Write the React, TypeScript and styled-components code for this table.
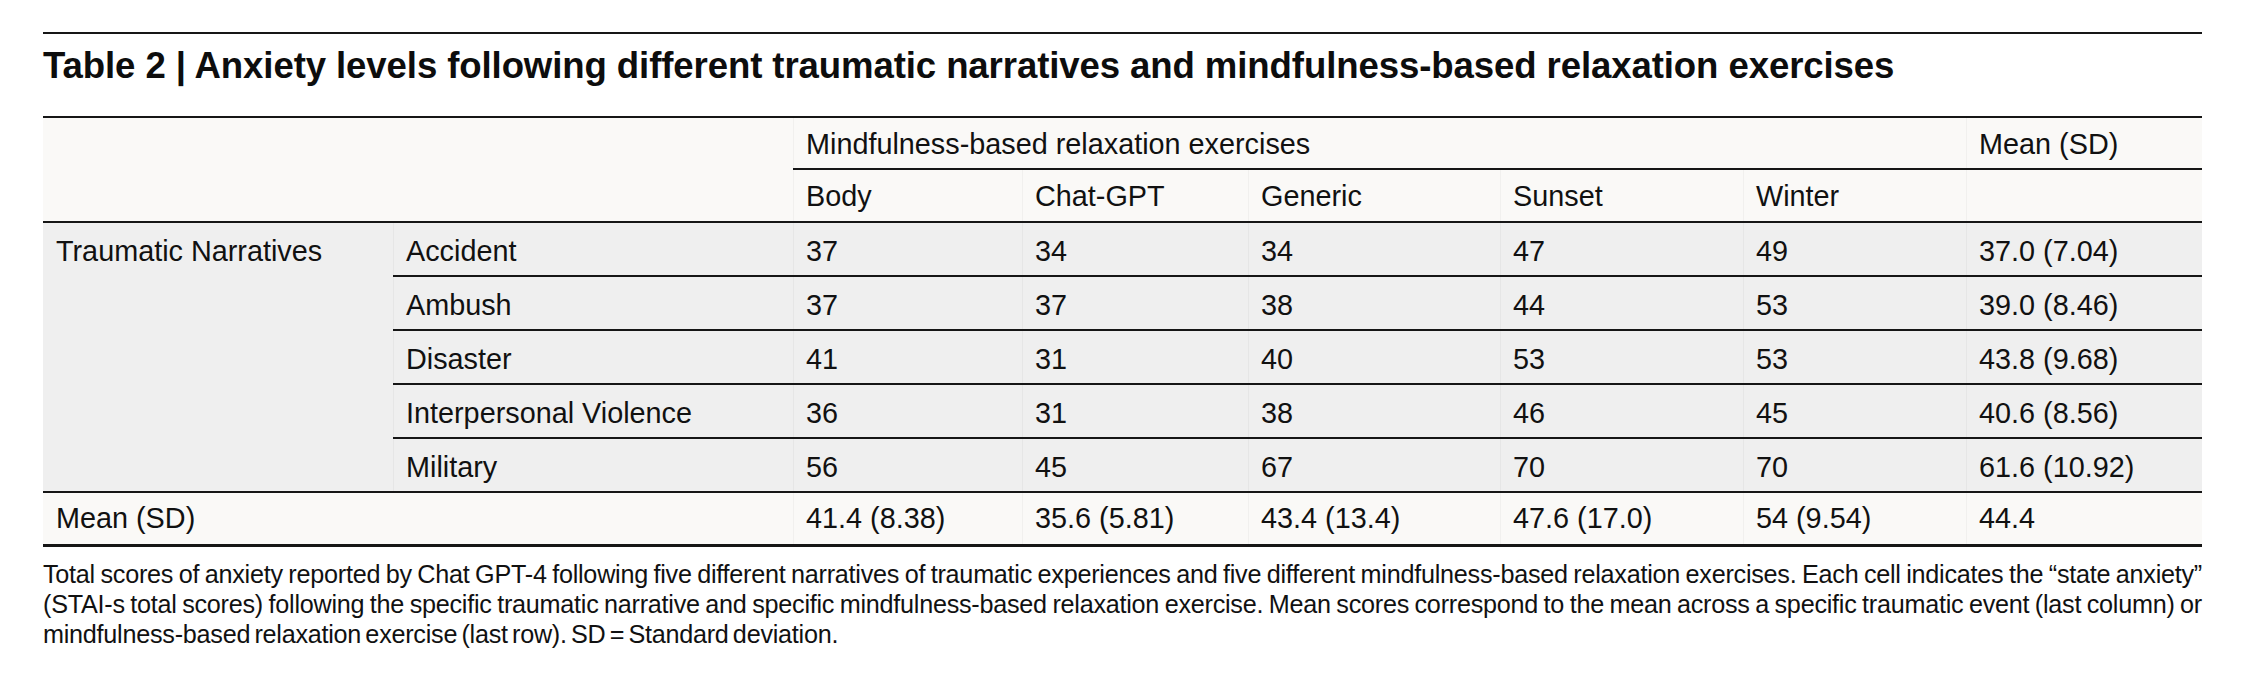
import React from "react";
import styled, { createGlobalStyle } from "styled-components";

const GlobalStyle = createGlobalStyle`
  html, body { margin: 0; padding: 0; background: #ffffff; }
  body { font-family: "Liberation Sans", Arial, sans-serif; color: #111111; }
`;

const Page = styled.div`
  padding: 32px 40px 0 43px;
`;

const Figure = styled.section`
  border-top: 2px solid #161616;
`;

const Title = styled.h1`
  margin: 12px 0 0;
  font-family: "Liberation Sans", Arial, sans-serif;
  font-weight: 700;
  font-size: 36.6px;
  line-height: 40px;
  letter-spacing: -0.1px;
  color: #0d0d0d;
`;

const Table = styled.table`
  margin-top: 30px;
  width: 100%;
  table-layout: fixed;
  border-collapse: separate;
  border-spacing: 0;
  border-top: 2px solid #161616;
  font-size: 28.8px;
  line-height: 30px;
  color: #111111;
`;

const Head = styled.thead`
  background: #faf9f7;
`;

const Body = styled.tbody`
  background: #efefef;
`;

const Foot = styled.tfoot`
  background: #faf9f7;
`;

type CellProps = {
  $rule?: boolean;
  $sep?: boolean;
  $pt: number;
  $pb: number;
  $thick?: boolean;
};

const Cell = styled.td<CellProps>`
  padding: ${(p) => p.$pt}px 8px ${(p) => p.$pb}px 13px;
  text-align: left;
  vertical-align: top;
  font-weight: 400;
  white-space: nowrap;
  border-bottom: ${(p) =>
    p.$rule ? `${p.$thick ? 3 : 2}px solid #161616` : "0 solid transparent"};
  box-shadow: ${(p) => (p.$sep ? "inset 1px 0 0 rgba(0,0,0,0.035)" : "none")};
`;

const HeadCell = styled(Cell).attrs({ as: "th" })``;

const Caption = styled.div`
  margin-top: 12px;
  font-size: 25.2px;
  line-height: 30px;
  letter-spacing: -0.25px;
  word-spacing: -2.5px;
  color: #111111;
`;

const CaptionLine = styled.span<{ $last?: boolean }>`
  display: block;
  text-align: ${(p) => (p.$last ? "left" : "justify")};
  text-align-last: ${(p) => (p.$last ? "left" : "justify")};
`;

const widths = [350, 400, 229, 226, 252, 243, 223, 236];

const exercises = ["Body", "Chat-GPT", "Generic", "Sunset", "Winter"];

const rows: { name: string; values: string[]; mean: string }[] = [
  { name: "Accident", values: ["37", "34", "34", "47", "49"], mean: "37.0 (7.04)" },
  { name: "Ambush", values: ["37", "37", "38", "44", "53"], mean: "39.0 (8.46)" },
  { name: "Disaster", values: ["41", "31", "40", "53", "53"], mean: "43.8 (9.68)" },
  {
    name: "Interpersonal Violence",
    values: ["36", "31", "38", "46", "45"],
    mean: "40.6 (8.56)",
  },
  { name: "Military", values: ["56", "45", "67", "70", "70"], mean: "61.6 (10.92)" },
];

const means = ["41.4 (8.38)", "35.6 (5.81)", "43.4 (13.4)", "47.6 (17.0)", "54 (9.54)", "44.4"];

export default function App() {
  return (
    <>
      <GlobalStyle />
      <Page>
        <Figure>
          <Title>
            Table 2 | Anxiety levels following different traumatic narratives and
            mindfulness-based relaxation exercises
          </Title>
          <Table>
            <colgroup>
              {widths.map((w, i) => (
                <col key={i} style={{ width: w }} />
              ))}
            </colgroup>
            <Head>
              <tr>
                <HeadCell colSpan={2} rowSpan={2} $pt={11} $pb={9} $rule />
                <HeadCell colSpan={5} $pt={11} $pb={9} $rule $sep>
                  Mindfulness-based relaxation exercises
                </HeadCell>
                <HeadCell $pt={11} $pb={9} $rule $sep>
                  Mean (SD)
                </HeadCell>
              </tr>
              <tr>
                {exercises.map((e) => (
                  <HeadCell key={e} $pt={11} $pb={10} $rule $sep>
                    {e}
                  </HeadCell>
                ))}
                <HeadCell $pt={11} $pb={10} $rule $sep />
              </tr>
            </Head>
            <Body>
              {rows.map((r, i) => (
                <tr key={r.name}>
                  {i === 0 && (
                    <Cell rowSpan={rows.length} $pt={13} $pb={9} $rule>
                      Traumatic Narratives
                    </Cell>
                  )}
                  <Cell $pt={13} $pb={9} $rule $sep>
                    {r.name}
                  </Cell>
                  {r.values.map((v, j) => (
                    <Cell key={j} $pt={13} $pb={9} $rule $sep>
                      {v}
                    </Cell>
                  ))}
                  <Cell $pt={13} $pb={9} $rule $sep>
                    {r.mean}
                  </Cell>
                </tr>
              ))}
            </Body>
            <Foot>
              <tr>
                <Cell colSpan={2} $pt={10} $pb={11} $rule $thick>
                  Mean (SD)
                </Cell>
                {means.map((m, j) => (
                  <Cell key={j} $pt={10} $pb={11} $rule $thick $sep>
                    {m}
                  </Cell>
                ))}
              </tr>
            </Foot>
          </Table>
          <Caption>
            <CaptionLine>
              Total scores of anxiety reported by Chat GPT-4 following five different narratives of
              traumatic experiences and five different mindfulness-based relaxation exercises. Each
              cell indicates the “state anxiety”
            </CaptionLine>
            <CaptionLine>
              (STAI-s total scores) following the specific traumatic narrative and specific
              mindfulness-based relaxation exercise. Mean scores correspond to the mean across a
              specific traumatic event (last column) or
            </CaptionLine>
            <CaptionLine $last>
              mindfulness-based relaxation exercise (last row). SD = Standard deviation.
            </CaptionLine>
          </Caption>
        </Figure>
      </Page>
    </>
  );
}
